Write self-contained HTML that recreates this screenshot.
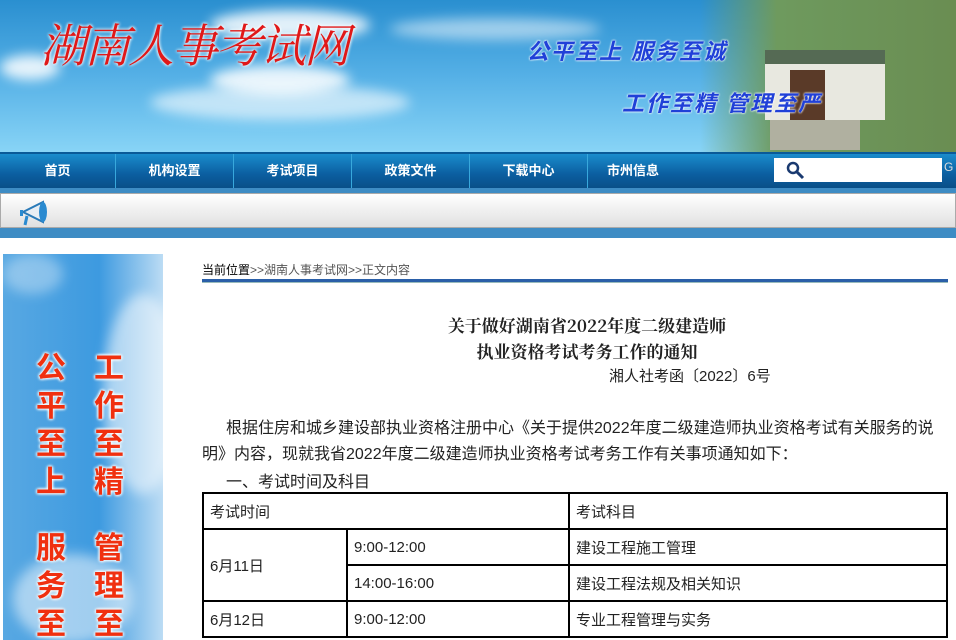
<!DOCTYPE html>
<html><head><meta charset="utf-8">
<style>
*{margin:0;padding:0;box-sizing:border-box}
body{width:956px;height:640px;overflow:hidden;background:#fff;font-family:"Liberation Sans","Noto Sans CJK SC",sans-serif;position:relative}
.abs{position:absolute}
#hdr{left:0;top:0;width:956px;height:152px;background:linear-gradient(180deg,#2a8fd0 0%,#55b0e6 50%,#88d4f6 100%);overflow:hidden}
.cloud{position:absolute;background:rgba(255,255,255,.85);border-radius:50%;filter:blur(6px)}
#nav{left:0;top:152px;width:956px;height:36px;background:linear-gradient(180deg,#1a8ccc 0%,#0b5ea0 60%,#094f88 100%);border-top:2px solid #0a5a98}
.ni{position:absolute;top:0;height:34px;line-height:34px;color:#fff;font-size:13px;font-weight:bold;text-align:center;border-right:1px solid #38a8dc}
#strip{left:0;top:188px;width:956px;height:50px;background:#3e8cc4}
#strip2{left:0;top:193px;width:956px;height:35px;background:linear-gradient(180deg,#fff,#e0e0e0);border:1px solid #aaa}
#side{left:3px;top:254px;width:160px;height:386px;background:linear-gradient(90deg,#58a8e2,#3d9ae0 60%,#bcdcf4);overflow:hidden}
.sc{position:absolute;color:#f03010;font-size:30px;font-weight:bold;width:36px;line-height:38px;text-align:center;text-shadow:0 0 3px #fff,0 0 3px #fff,0 0 3px #fff}
table{border-collapse:collapse;position:absolute;left:202px;top:492px;width:746px}
td{border:2px solid #000;font-size:15px;padding-left:6px;height:36px;color:#222}
</style></head><body>
<div id="hdr" class="abs">
<div class="cloud" style="left:210px;top:10px;width:160px;height:30px"></div>
<div class="cloud" style="left:0;top:55px;width:60px;height:25px"></div>
<div class="cloud" style="left:210px;top:65px;width:140px;height:30px"></div>
<div class="cloud" style="left:150px;top:85px;width:260px;height:35px;opacity:.7"></div>
<div class="cloud" style="left:390px;top:18px;width:210px;height:22px;opacity:.6"></div>
<div class="abs" style="left:700px;top:0;width:256px;height:152px;background:linear-gradient(90deg,rgba(120,170,110,0),#6e9a5e 30%,#6a8d52)"></div>
<div class="abs" style="left:765px;top:50px;width:120px;height:70px;background:#e8e8e0;border-top:14px solid #556a54"></div>
<div class="abs" style="left:790px;top:70px;width:35px;height:55px;background:#5a3a28"></div>
<div class="abs" style="left:770px;top:120px;width:90px;height:30px;background:#b0b0a0"></div>
<div class="abs" style="left:40px;top:10px;color:#e01818;font-size:46px;font-style:italic;font-family:'Noto Serif CJK SC',serif;text-shadow:0 0 3px #fff,0 0 3px #fff;letter-spacing:-2px">湖南人事考试网</div>
<div class="abs" style="left:527px;top:34px;color:#2040d8;font-size:22px;font-weight:bold;font-style:italic;text-shadow:0 0 2px #fff,0 0 2px #fff;letter-spacing:2px">公平至上 服务至诚</div>
<div class="abs" style="left:622px;top:86px;color:#2040d8;font-size:22px;font-weight:bold;font-style:italic;text-shadow:0 0 2px #fff,0 0 2px #fff;letter-spacing:2px">工作至精 管理至严</div>
</div>
<div id="nav" class="abs">
<div class="ni" style="left:0;width:116px">首页</div>
<div class="ni" style="left:116px;width:118px">机构设置</div>
<div class="ni" style="left:234px;width:118px">考试项目</div>
<div class="ni" style="left:352px;width:118px">政策文件</div>
<div class="ni" style="left:470px;width:118px">下载中心</div>
<div class="ni" style="left:588px;width:90px;border:none">市州信息</div>
<div class="abs" style="left:774px;top:4px;width:168px;height:24px;background:#fff"></div>
<svg class="abs" style="left:786px;top:7px" width="20" height="20" viewBox="0 0 20 20"><circle cx="7" cy="7" r="5" fill="none" stroke="#1a3a70" stroke-width="2.5"/><path d="M11 11l6 6" stroke="#1a3a70" stroke-width="3"/></svg>
<div class="abs" style="left:944px;top:6px;color:#ddd;font-size:12px">G</div>
</div>
<div id="strip" class="abs"></div>
<div id="strip2" class="abs">
<svg class="abs" style="left:14px;top:4px" width="36" height="30" viewBox="0 0 36 30"><path d="M8 14l20-10v20z" fill="#e8eef4" stroke="#2a7ab8" stroke-width="2"/><ellipse cx="28" cy="14" rx="4" ry="10" fill="#2a8ad0"/><path d="M8 12v6l-3 0v-6z" fill="#2a8ad0"/><path d="M12 18l-2 9" stroke="#2a8ad0" stroke-width="3"/></svg>
</div>
<div id="side" class="abs">
<div class="cloud" style="left:100px;top:40px;width:80px;height:200px;opacity:.6"></div>
<div class="cloud" style="left:10px;top:300px;width:120px;height:90px;opacity:.6"></div>
<div class="cloud" style="left:0;top:0;width:60px;height:40px;opacity:.4"></div>
<div class="sc" style="left:30px;top:96px">公<br>平<br>至<br>上</div>
<div class="sc" style="left:88px;top:96px">工<br>作<br>至<br>精</div>
<div class="sc" style="left:30px;top:276px">服<br>务<br>至</div>
<div class="sc" style="left:88px;top:276px">管<br>理<br>至</div>
</div>
<div class="abs" style="left:202px;top:261px;font-size:12px;color:#555"><span style="color:#000">当前位置</span>&gt;&gt;湖南人事考试网&gt;&gt;正文内容</div>
<div class="abs" style="left:202px;top:279px;width:746px;height:4px;background:#2a5fa8;border-bottom:1px solid #9bb"></div>
<div class="abs" style="left:202px;top:312px;width:770px;text-align:center;font-family:'Noto Serif CJK SC',serif;font-weight:bold;font-size:17px;line-height:26px;color:#222">关于做好湖南省2022年度二级建造师<br>执业资格考试考务工作的通知</div>
<div class="abs" style="left:609px;top:365px;font-size:15px;color:#222">湘人社考函〔2022〕6号</div>
<div class="abs" style="left:202px;top:416px;width:750px;font-size:16px;line-height:26px;color:#222;text-indent:24px">根据住房和城乡建设部执业资格注册中心《关于提供2022年度二级建造师执业资格考试有关服务的说明》内容，现就我省2022年度二级建造师执业资格考试考务工作有关事项通知如下：</div>
<div class="abs" style="left:226px;top:468px;font-size:16px;color:#222">一、考试时间及科目</div>
<table>
<tr><td colspan="2" style="width:366px">考试时间</td><td>考试科目</td></tr>
<tr><td rowspan="2" style="width:144px">6月11日</td><td style="width:222px">9:00-12:00</td><td>建设工程施工管理</td></tr>
<tr><td>14:00-16:00</td><td>建设工程法规及相关知识</td></tr>
<tr><td>6月12日</td><td>9:00-12:00</td><td>专业工程管理与实务</td></tr>
</table>
</body></html>
